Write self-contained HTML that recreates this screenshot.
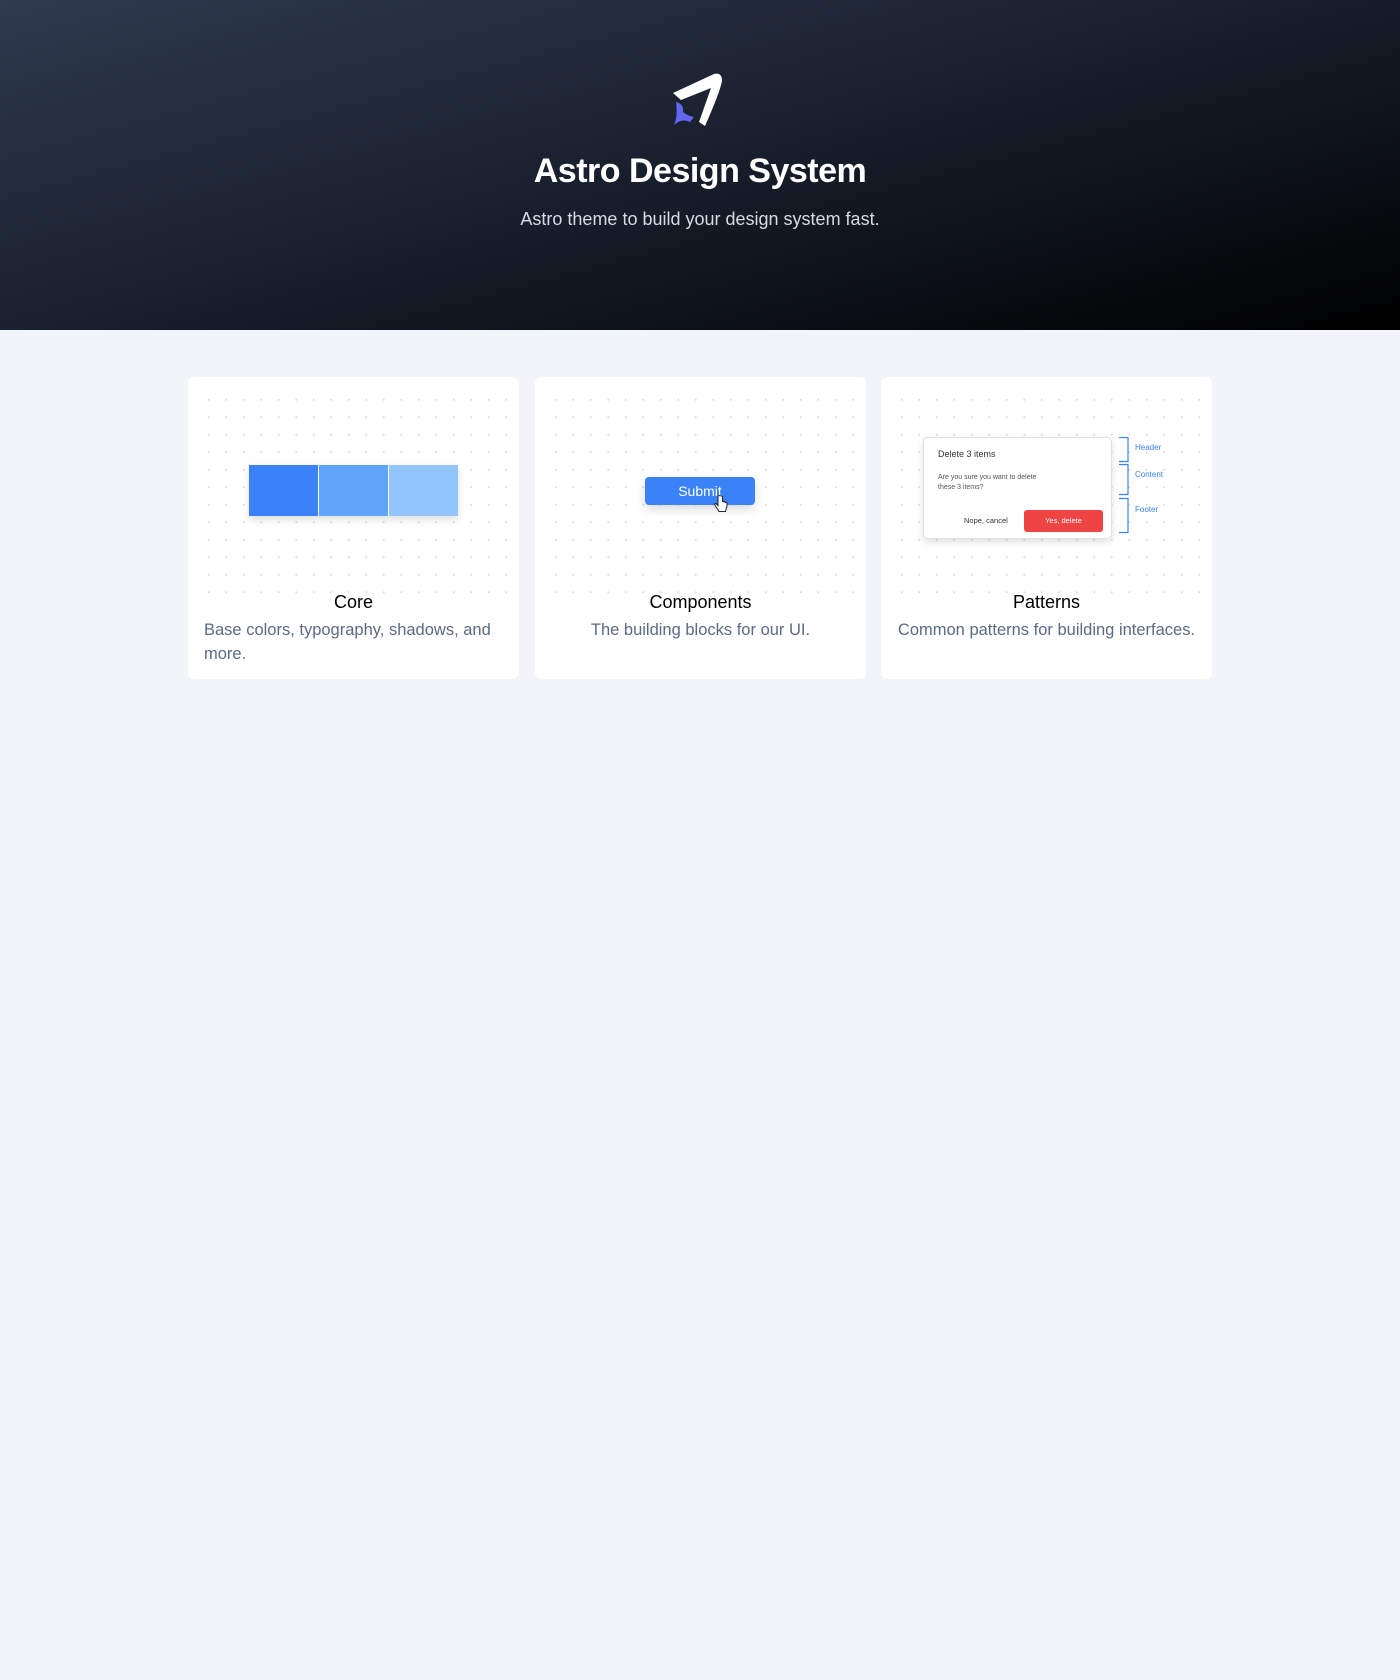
<!DOCTYPE html>
<html><head><meta charset="utf-8"><style>
*{box-sizing:border-box;margin:0;padding:0}
body{width:1400px;height:1680px;background:#f1f4f9;font-family:"Liberation Sans",sans-serif;position:relative;overflow:hidden}
.hero{position:absolute;left:0;top:0;width:1400px;height:330px;background:linear-gradient(165deg,#2e3a4e 0%,#1a2130 45%,#000 100%)}
.hero h1{position:absolute;top:152px;width:100%;text-align:center;color:#fff;font-size:34px;font-weight:700;letter-spacing:-0.5px}
.hero p{position:absolute;top:209px;width:100%;text-align:center;color:#d7dbe3;font-size:18px}
.card{position:absolute;top:377px;width:331px;height:302px;background:#fff;border-radius:6px}
.dots{position:absolute;left:10px;right:10px;top:12px;height:206px;background-image:radial-gradient(circle,#d8dce2 0.8px,transparent 1.2px);background-size:17.5px 17.5px;background-position:2px 2px}
.t{position:absolute;top:215px;width:100%;text-align:center;font-size:18px;color:#000}
.d{position:absolute;top:241px;left:16px;right:16px;font-size:16.5px;line-height:24px;color:#5b6b84}
</style></head><body>
<div class="hero">
<svg style="position:absolute;left:670px;top:72px" width="56" height="56" viewBox="0 0 56 56">
<path d="M3 21 L44 2 Q52 0 52 9 Q50 20 35 54 L29 50 L41 16 L11 28 Z" fill="#fff"/>
<path d="M6 30 Q14 32 13 40 Q18 44 24 45 L20 50 Q12 46 4 53 Q8 44 6 30Z" fill="#6366f1"/>
</svg>
<h1>Astro Design System</h1>
<p>Astro theme to build your design system fast.</p>
</div>

<div class="card" style="left:188px">
<div class="dots"></div>
<div style="position:absolute;left:61px;top:88px;width:209px;height:51px;display:flex;gap:1px;box-shadow:0 4px 8px rgba(0,0,0,.12)">
<div style="flex:1;background:#3b82f6"></div><div style="flex:1;background:#60a5fa"></div><div style="flex:1;background:#93c5fd"></div></div>
<div class="t">Core</div>
<div class="d">Base colors, typography, shadows, and more.</div>
</div>

<div class="card" style="left:535px">
<div class="dots"></div>
<div style="position:absolute;left:110px;top:100px;width:110px;height:28px;background:#3b82f6;border-radius:4px;color:#fff;font-size:14px;text-align:center;line-height:28px;box-shadow:0 4px 10px rgba(0,0,0,.15)">Submit</div>
<svg style="position:absolute;left:179px;top:118px" width="14" height="18" viewBox="0 0 14 18"><path d="M4 1.5v9l-1.5-1.5c-1-1-2.5 0-1.5 1.2L5 16.5h6.5L13 11V8c0-1-1.5-1-1.5 0V7.5c0-1-1.5-1-1.5 0V7c0-1-1.5-1-1.5 0V1.5C7 0.3 4 0.3 4 1.5z" fill="#fff" stroke="#222" stroke-width="1"/></svg>
<div class="t">Components</div>
<div class="d" style="text-align:center">The building blocks for our UI.</div>
</div>

<div class="card" style="left:881px">
<div class="dots"></div>
<div style="position:absolute;left:42px;top:60px;width:189px;height:102px;background:#fff;border:1px solid #dde1e7;border-radius:5px;box-shadow:0 3px 8px rgba(0,0,0,.12)">
<div style="position:absolute;left:14px;top:11px;font-size:9px;color:#333">Delete 3 items</div>
<div style="position:absolute;left:14px;top:35px;font-size:7px;line-height:10px;color:#555">Are you sure you want to delete<br>these 3 items?</div>
<div style="position:absolute;left:40px;top:78px;font-size:7.5px;color:#333">Nope, cancel</div>
<div style="position:absolute;left:100px;top:72px;width:79px;height:22px;background:#ef4444;border-radius:3px;color:#fff;font-size:7.5px;text-align:center;line-height:22px">Yes, delete</div>
</div>
<svg style="position:absolute;left:238px;top:60px" width="80" height="104" viewBox="0 0 80 104">
<g fill="none" stroke="#3b82f6" stroke-width="1.2"><path d="M0 .5h9v24H0M0 27.5h9v30H0M0 61.5h9v34H0"/></g>
<g fill="#3b82f6" font-size="8" font-family="Liberation Sans"><text x="16" y="13">Header</text><text x="16" y="40">Content</text><text x="16" y="75">Footer</text></g>
</svg>
<div class="t">Patterns</div>
<div class="d" style="text-align:center;left:8px;right:8px">Common patterns for building interfaces.</div>
</div>
</body></html>
